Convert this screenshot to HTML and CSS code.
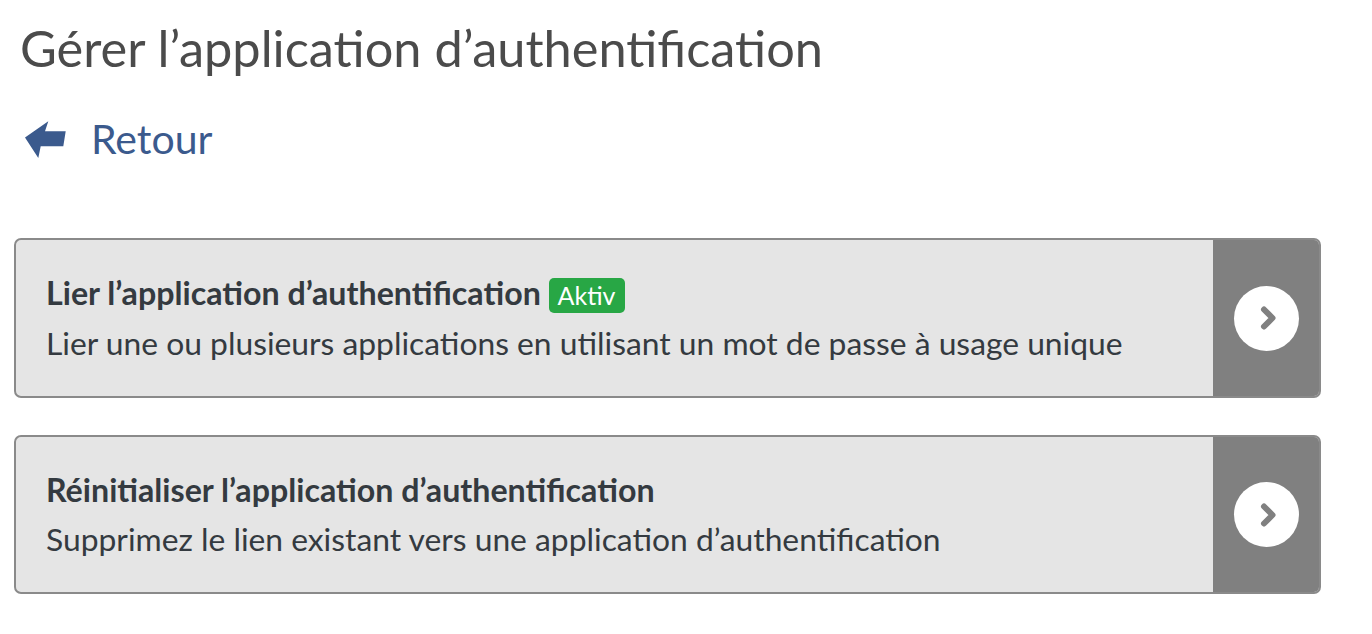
FILE: index.html
```html
<!DOCTYPE html>
<html lang="fr">
<head>
<meta charset="utf-8">
<title>Gérer l’application d’authentification</title>
<link rel="stylesheet" href="styles.css">
</head>
<body>
<main class="page">
  <h1 class="page-title">Gérer l’application d’authentification</h1>
  <a class="back-link" href="#">
    <svg class="back-icon" width="44" height="40" viewBox="0 0 44 40" aria-hidden="true">
      <polygon points="1,17.5 24.3,1.3 21,11.3 41.7,11.3 39.3,26.3 16.7,26.3 14.3,38" fill="#3b5a8d"/>
    </svg>
    <span class="back-text">Retour</span>
  </a>
  <div class="cards">
    <a class="card" href="#">
      <div class="card-body">
        <div class="card-title">Lier l’application d’authentification <span class="badge">Aktiv</span></div>
        <div class="card-desc">Lier une ou plusieurs applications en utilisant un mot de passe à usage unique</div>
      </div>
      <div class="card-action">
        <span class="circle">
          <svg width="30" height="30" viewBox="0 0 30 30" aria-hidden="true">
            <polyline points="11,6.5 19.5,15 11,23.5" fill="none" stroke="#808080" stroke-width="6" stroke-linecap="round" stroke-linejoin="round"/>
          </svg>
        </span>
      </div>
    </a>
    <a class="card" href="#">
      <div class="card-body">
        <div class="card-title">Réinitialiser l’application d’authentification</div>
        <div class="card-desc">Supprimez le lien existant vers une application d’authentification</div>
      </div>
      <div class="card-action">
        <span class="circle">
          <svg width="30" height="30" viewBox="0 0 30 30" aria-hidden="true">
            <polyline points="11,6.5 19.5,15 11,23.5" fill="none" stroke="#808080" stroke-width="6" stroke-linecap="round" stroke-linejoin="round"/>
          </svg>
        </span>
      </div>
    </a>
  </div>
</main>
</body>
</html>
```

FILE: styles.css
```css
html, body {
  margin: 0;
  padding: 0;
  background: #ffffff;
}

body {
  font-family: Lato, "Open Sans", "Liberation Sans", sans-serif;
}

.page {
  padding: 18px 51px 0 14px;
}

.page-title {
  margin: 0 0 0 6px;
  font-size: 50.5px;
  line-height: 60px;
  font-weight: 400;
  color: #4b4b4b;
}

.back-link {
  display: flex;
  align-items: center;
  gap: 23px;
  margin: 37px 0 0 10px;
  height: 48px;
  text-decoration: none;
  color: #3b5a8d;
}

.back-icon {
  display: block;
  margin-top: 2px;
}

.back-text {
  font-size: 41px;
  line-height: 48px;
}

.cards {
  display: flex;
  flex-direction: column;
  gap: 37px;
  margin-top: 75px;
}

.card {
  display: flex;
  border: 2px solid #8a8a8a;
  border-radius: 7px;
  background: #e5e5e5;
  text-decoration: none;
  color: #343a40;
  overflow: hidden;
}

.card-body {
  flex: 1;
  padding: 34px 30px 34px 30px;
}

.card-title {
  font-size: 32.2px;
  line-height: 38px;
  font-weight: 700;
}

.badge {
  display: inline-block;
  font-size: 25px;
  line-height: 24px;
  font-weight: 400;
  padding: 5px 9px 6px 9px;
  border-radius: 5px;
  background: #28a745;
  color: #ffffff;
}

.card-desc {
  margin-top: 11px;
  font-size: 31.8px;
  line-height: 38px;
  font-weight: 400;
}

.card-action {
  width: 106px;
  background: #808080;
  display: flex;
  align-items: center;
  justify-content: center;
}

.circle {
  width: 65px;
  height: 65px;
  border-radius: 50%;
  background: #ffffff;
  display: flex;
  align-items: center;
  justify-content: center;
}

.circle svg {
  display: block;
  margin-left: 3px;
}
```
